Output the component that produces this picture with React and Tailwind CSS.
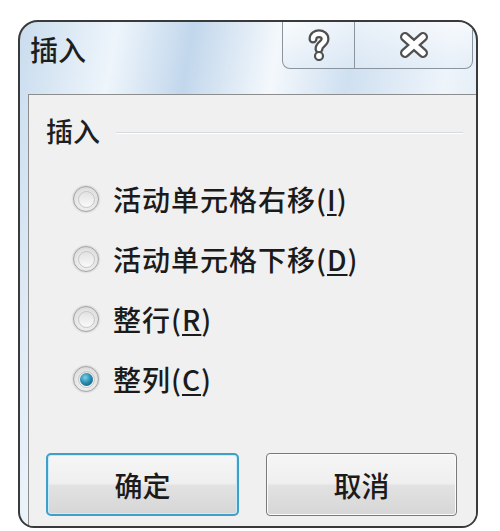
import React from 'react';

const font = { fontFamily: '"Noto Sans CJK SC", "Noto Sans", sans-serif' };

function Radio({ checked }) {
  return (
    <span className="relative flex h-[26px] w-[26px] items-center justify-center rounded-full border border-[#a3a3a3] bg-[radial-gradient(circle_at_50%_60%,#ffffff_0%,#e6e6e6_55%,#cbcbcb_100%)] shadow-[0_0_2px_rgba(0,0,0,0.25)]">
      <span className="flex h-[17px] w-[17px] items-center justify-center rounded-full border border-[#c4c4c4] bg-[linear-gradient(180deg,#e2e2e2,#fafafa)]">
        {checked && (
          <span className="h-[13px] w-[13px] rounded-full bg-[radial-gradient(circle_at_40%_35%,#7fd0e8_0%,#2a8fb3_45%,#0d4d6a_100%)]" />
        )}
      </span>
    </span>
  );
}

function Option({ label, hot, checked }) {
  return (
    <div className="flex h-[60px] items-center">
      <Radio checked={checked} />
      <span className="ml-[14px] text-[28px] font-medium leading-none tracking-[1px] text-[#1b1b1b]">
        {label}(<span className="underline decoration-[1.5px] underline-offset-[3px]">{hot}</span>)
      </span>
    </div>
  );
}

function HelpIcon() {
  return (
    <svg width="24" height="32" viewBox="0 0 24 32">
      <path d="M6 10 C6 3 18 3 18 10 C18 15 12 15 12 20" fill="none" stroke="#505050" strokeWidth="9" strokeLinecap="round" />
      <path d="M6 10 C6 3 18 3 18 10 C18 15 12 15 12 20" fill="none" stroke="#ffffff" strokeWidth="4.5" strokeLinecap="round" />
      <circle cx="12" cy="27" r="4" fill="#ffffff" stroke="#505050" strokeWidth="2.2" />
    </svg>
  );
}

function CloseIcon() {
  return (
    <svg width="30" height="26" viewBox="0 0 30 26">
      <path d="M6 5 L24 21 M24 5 L6 21" fill="none" stroke="#505050" strokeWidth="10" strokeLinecap="round" />
      <path d="M6 5 L24 21 M24 5 L6 21" fill="none" stroke="#ffffff" strokeWidth="5.5" strokeLinecap="round" />
    </svg>
  );
}

export default function App() {
  return (
    <div className="h-[531px] w-[500px] overflow-hidden bg-white pl-[18px] pt-[20px]" style={font}>
      <div className="flex h-[508px] w-[460px] flex-col overflow-hidden rounded-t-[20px] rounded-b-[16px] border-2 border-[#3a3a3a] bg-[linear-gradient(100deg,#c9dcee_0%,#eef5fb_18%,#c2d7ec_32%,#f4f8fc_48%,#cfe0f1_62%,#eef4fa_80%,#d2e2f2_100%)]">
        {/* title bar */}
        <div className="flex h-[72px] shrink-0 items-start">
          <div className="pl-[10px] pt-[13px] text-[28px] font-medium leading-none text-[#1e1e1e]">插入</div>
          <div className="ml-auto mr-[3px] flex h-[47px] rounded-b-[8px] border border-t-0 border-[#8a949e] bg-[linear-gradient(180deg,rgba(255,255,255,0.55),rgba(225,236,246,0.6))]">
            <div className="flex w-[72px] items-center justify-center border-r border-[#8a949e]">
              <HelpIcon />
            </div>
            <div className="flex w-[117px] items-center justify-center">
              <CloseIcon />
            </div>
          </div>
        </div>

        {/* client area */}
        <div className="ml-[8px] flex flex-1 flex-col border-l border-t border-[#8d8d8d] bg-[#f0f0f0] pl-[17px] pr-[13px]">
          <div className="mt-[22px] flex items-center">
            <span className="text-[27px] font-medium leading-none text-[#1e1e1e]">插入</span>
            <span className="ml-[16px] mt-[4px] h-[2px] flex-1 border-t border-b border-t-[#d3dae0] border-b-white" />
          </div>
          <div className="mt-[25px] flex flex-col pl-[27px]">
            <Option label="活动单元格右移" hot="I" />
            <Option label="活动单元格下移" hot="D" />
            <Option label="整行" hot="R" />
            <Option label="整列" hot="C" checked />
          </div>
          <div className="mt-[44px] flex gap-[27px]">
            <button className="flex h-[63px] w-[193px] items-center justify-center rounded-[5px] border-2 border-[#3f9fc8] bg-[linear-gradient(180deg,#f6f6f6_0%,#efefef_48%,#e2e2e2_52%,#d6d6d6_100%)] text-[28px] font-medium leading-none text-[#1b1b1b] shadow-[inset_0_0_0_1px_#c8ecf8]">
              确定
            </button>
            <button className="flex h-[63px] w-[191px] items-center justify-center rounded-[4px] border border-[#7a7a7a] bg-[linear-gradient(180deg,#f6f6f6_0%,#efefef_48%,#e2e2e2_52%,#d6d6d6_100%)] text-[28px] font-medium leading-none text-[#1b1b1b] shadow-[inset_0_0_0_1px_#fbfbfb]">
              取消
            </button>
          </div>
        </div>
      </div>
    </div>
  );
}
